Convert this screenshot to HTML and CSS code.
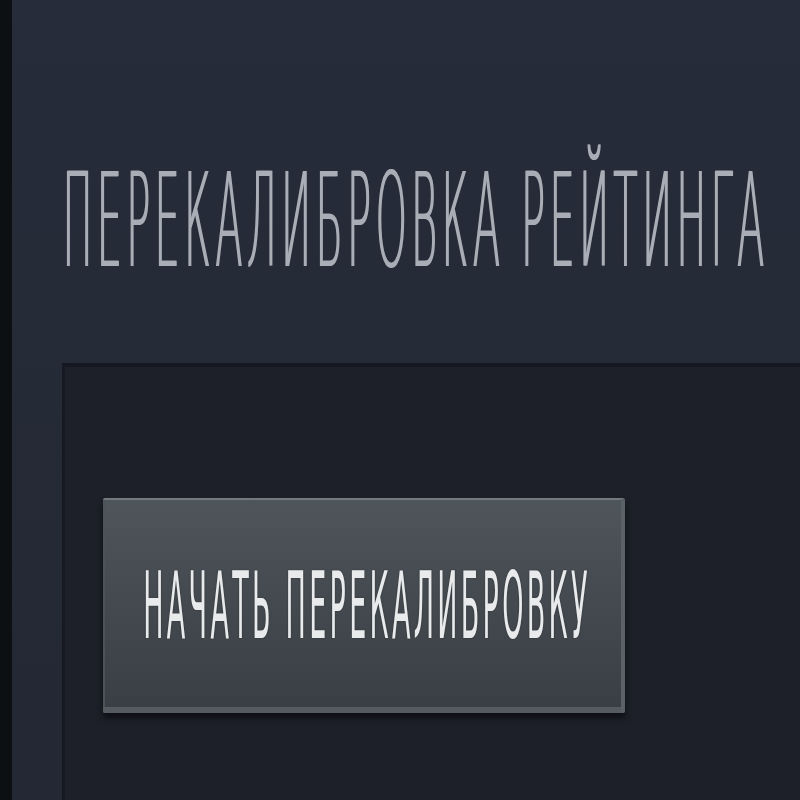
FILE: index.html
```html
<!DOCTYPE html>
<html lang="ru">
<head>
  <meta charset="UTF-8">
  <meta name="viewport" content="width=device-width, initial-scale=1.0">
  <title>Перекалибровка рейтинга</title>
  <link rel="stylesheet" href="styles.css">
</head>
<body>
  <div class="edge"></div>
  <main class="main">
    <header class="header">
      <h1 class="title"><span>ПЕРЕКАЛИБРОВКА РЕЙТИНГА</span></h1>
    </header>

    <section class="panel">
      <button class="start-btn"><span>НАЧАТЬ ПЕРЕКАЛИБРОВКУ</span></button>
    </section>
  </main>
</body>
</html>
```

FILE: styles.css
```css
html, body {
  height: 100%;
}
body {
  margin: 0;
  display: flex;
  background: #0d1013;
  font-family: "DejaVu Sans", sans-serif;
  overflow: hidden;
}
.edge {
  width: 12px;
  flex: none;
}
.main {
  flex: 1;
  display: flex;
  flex-direction: column;
  background: linear-gradient(#262c39, #232834);
}
.header {
  height: 363px;
  box-sizing: border-box;
  padding: 155px 0 0 50px;
}
.title {
  margin: 0;
  font-size: 40px;
  font-weight: 200;
  line-height: 1;
  color: #a9aeb6;
  letter-spacing: 4.2px;
  white-space: nowrap;
}
.title span {
  display: inline-block;
  transform: scaleY(3.27);
  transform-origin: 0 0;
  text-shadow: 1px 0 0 #a9aeb6;
}
.panel {
  flex: 1;
  margin-left: 50px;
  border-top: 4px solid #151820;
  border-left: 3px solid #161922;
  background: #1d2029;
  padding: 131px 0 0 38px;
}
.start-btn {
  display: flex;
  align-items: center;
  justify-content: center;
  width: 522px;
  height: 215px;
  padding: 0 0 0 10px;
  border: 0;
  border-top: 2px solid #72797f;
  border-right: 4px solid #5b6267;
  border-radius: 2px;
  background: linear-gradient(#4e555b, #41474c 60%, #393e43);
  box-shadow: inset 0 -6px 0 #555c61, inset 2px 0 0 #4c5358, 0 5px 6px rgba(0, 0, 0, 0.55);
  color: #e8eaec;
  font-family: "DejaVu Sans Condensed", "DejaVu Sans", sans-serif;
  font-size: 30px;
  line-height: 1;
  letter-spacing: 3.3px;
  white-space: nowrap;
  cursor: pointer;
}
.start-btn span {
  display: inline-block;
  transform: scaleY(3.06);
  text-shadow: 0 0 1px rgba(0, 0, 0, 0.4);
}
```
